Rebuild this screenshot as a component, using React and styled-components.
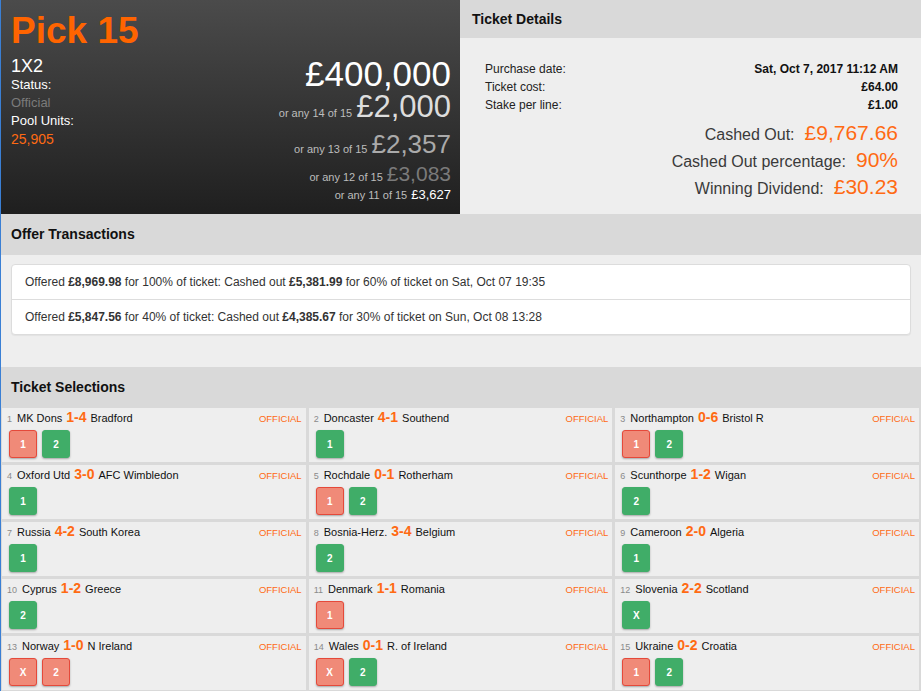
import React from 'react'
import styled, { createGlobalStyle } from 'styled-components'

const GlobalStyle = createGlobalStyle`
  body {
    margin: 0;
    background: #eeeeee;
    font-family: "Liberation Sans", Arial, sans-serif;
    color: #222;
  }
`

const prizes = [
  { label: null, amount: '£400,000', size: 35, color: '#ffffff', mt: 0 },
  { label: 'or any 14 of 15', amount: '£2,000', size: 31, color: '#dddddd', mt: 0 },
  { label: 'or any 13 of 15', amount: '£2,357', size: 26, color: '#aaaaaa', mt: 9 },
  { label: 'or any 12 of 15', amount: '£3,083', size: 21, color: '#7a7a7a', mt: 6 },
  { label: 'or any 11 of 15', amount: '£3,627', size: 13, color: '#ffffff', mt: 4 },
]

const offers = [
  ['£8,969.98', '100%', '£5,381.99', '60%', 'Sat, Oct 07 19:35'],
  ['£5,847.56', '40%', '£4,385.67', '30%', 'Sun, Oct 08 13:28'],
]

// picks: [label, won]
const selections = [
  [1, 'MK Dons', '1-4', 'Bradford', [['1', false], ['2', true]]],
  [2, 'Doncaster', '4-1', 'Southend', [['1', true]]],
  [3, 'Northampton', '0-6', 'Bristol R', [['1', false], ['2', true]]],
  [4, 'Oxford Utd', '3-0', 'AFC Wimbledon', [['1', true]]],
  [5, 'Rochdale', '0-1', 'Rotherham', [['1', false], ['2', true]]],
  [6, 'Scunthorpe', '1-2', 'Wigan', [['2', true]]],
  [7, 'Russia', '4-2', 'South Korea', [['1', true]]],
  [8, 'Bosnia-Herz.', '3-4', 'Belgium', [['2', true]]],
  [9, 'Cameroon', '2-0', 'Algeria', [['1', true]]],
  [10, 'Cyprus', '1-2', 'Greece', [['2', true]]],
  [11, 'Denmark', '1-1', 'Romania', [['1', false]]],
  [12, 'Slovenia', '2-2', 'Scotland', [['X', true]]],
  [13, 'Norway', '1-0', 'N Ireland', [['X', false], ['2', false]]],
  [14, 'Wales', '0-1', 'R. of Ireland', [['X', false], ['2', true]]],
  [15, 'Ukraine', '0-2', 'Croatia', [['1', false], ['2', true]]],
]

function App() {
  return (
    <Page>
      <GlobalStyle />
      <Top>
        <Hero>
          <Title>Pick 15</Title>
          <HeroBody>
            <Info>
              <GameType>1X2</GameType>
              <InfoLine>Status:</InfoLine>
              <InfoLine muted>Official</InfoLine>
              <InfoLine>Pool Units:</InfoLine>
              <Units>25,905</Units>
            </Info>
            <Prizes>
              {prizes.map((p, i) => (
                <PrizeRow key={i} size={p.size} color={p.color} mt={p.mt}>
                  {p.label && <PrizeLabel>{p.label}</PrizeLabel>}
                  <span>{p.amount}</span>
                </PrizeRow>
              ))}
            </Prizes>
          </HeroBody>
        </Hero>

        <Details>
          <SectionHeader pl={12} compact>Ticket Details</SectionHeader>
          <DetailsBody>
            <InfoRow><span>Purchase date:</span><b>Sat, Oct 7, 2017 11:12 AM</b></InfoRow>
            <InfoRow><span>Ticket cost:</span><b>£64.00</b></InfoRow>
            <InfoRow><span>Stake per line:</span><b>£1.00</b></InfoRow>
            <Summary>
              <SummaryRow><span>Cashed Out:</span><Hot>£9,767.66</Hot></SummaryRow>
              <SummaryRow><span>Cashed Out percentage:</span><Hot>90%</Hot></SummaryRow>
              <SummaryRow><span>Winning Dividend:</span><Hot>£30.23</Hot></SummaryRow>
            </Summary>
          </DetailsBody>
        </Details>
      </Top>

      <SectionHeader>Offer Transactions</SectionHeader>
      <OffersBody>
        <OfferCard>
          {offers.map((o, i) => (
            <OfferRow key={i}>
              Offered <b>{o[0]}</b> for {o[1]} of ticket: Cashed out <b>{o[2]}</b> for {o[3]} of ticket on {o[4]}
            </OfferRow>
          ))}
        </OfferCard>
      </OffersBody>

      <SectionHeader>Ticket Selections</SectionHeader>
      <Grid>
        {selections.map(([n, home, score, away, picks]) => (
          <Cell key={n}>
            <CellHead>
              <Num>{n}</Num>
              <Team>{home}</Team>
              <Score>{score}</Score>
              <Team>{away}</Team>
              <Official>OFFICIAL</Official>
            </CellHead>
            <Picks>
              {picks.map(([label, won]) => (
                <Pick key={label} won={won}>{label}</Pick>
              ))}
            </Picks>
          </Cell>
        ))}
      </Grid>
    </Page>
  )
}

export default App

const Page = styled.div`
  border-left: 1px solid #3a7fd4;
  min-height: 100vh;
`

const Top = styled.div`
  display: grid;
  grid-template-columns: 459px 1fr;
`

const Hero = styled.div`
  background: linear-gradient(to bottom, #4b4b4b, #1f1f1f);
  padding: 12px 9px 12px 10px;
  height: 214px;
  box-sizing: border-box;
`

const Title = styled.div`
  color: #ff6400;
  font-size: 37px;
  font-weight: bold;
  line-height: 37px;
`

const HeroBody = styled.div`
  display: flex;
  justify-content: space-between;
  margin-top: 7px;
`

const Info = styled.div`
  color: #fff;
`

const GameType = styled.div`
  font-size: 18px;
  line-height: 20px;
`

const InfoLine = styled.div`
  font-size: 13px;
  line-height: 18px;
  color: ${p => (p.muted ? '#7b7b7b' : '#ffffff')};
`

const Units = styled.div`
  font-size: 14px;
  line-height: 18px;
  color: #ff6a13;
`

const Prizes = styled.div`
  display: flex;
  flex-direction: column;
  align-items: flex-end;
`

const PrizeRow = styled.div`
  display: flex;
  align-items: baseline;
  gap: 4px;
  font-size: ${p => p.size}px;
  line-height: 1;
  color: ${p => p.color};
  margin-top: ${p => p.mt}px;
`

const PrizeLabel = styled.span`
  font-size: 11px;
  line-height: 1;
  color: #bdbdbd;
`

const Details = styled.div`
  background: #eeeeee;
`

const SectionHeader = styled.div`
  background: #d9d9d9;
  font-size: 14px;
  font-weight: bold;
  line-height: 18px;
  color: #111;
  padding: ${p => (p.compact ? '10px' : '11px')} 10px ${p => (p.compact ? '10px' : '12px')} ${p => p.pl || 10}px;
`

const DetailsBody = styled.div`
  padding: 22px 23px 0 25px;
`

const InfoRow = styled.div`
  display: flex;
  justify-content: space-between;
  font-size: 12px;
  line-height: 18px;
  color: #222;

  b {
    color: #111;
  }
`

const Summary = styled.div`
  margin-top: 6px;
`

const SummaryRow = styled.div`
  display: flex;
  justify-content: flex-end;
  align-items: baseline;
  gap: 10px;
  font-size: 16px;
  line-height: 25px;
  color: #3a3a3a;
`

const Hot = styled.span`
  font-size: 21px;
  color: #ff6a13;
`

const OffersBody = styled.div`
  padding: 9px 10px 32px;
  background: #eeeeee;
`

const OfferCard = styled.div`
  background: #fff;
  border: 1px solid #dcdcdc;
  border-radius: 4px;
  box-shadow: 0 1px 1px rgba(0, 0, 0, 0.05);
`

const OfferRow = styled.div`
  padding: 8px 13px;
  font-size: 12px;
  line-height: 18px;
  color: #333;

  & + & {
    border-top: 1px solid #dddddd;
  }
`

const Grid = styled.div`
  display: grid;
  grid-template-columns: repeat(3, 1fr);
  gap: 3px;
  padding: 0 2px 3px 1px;
  background: #d9d9d9;
`

const Cell = styled.div`
  background: #eeeeee;
  height: 54px;
  padding: 1px 4px 0 5px;
  box-sizing: border-box;
`

const CellHead = styled.div`
  display: flex;
  align-items: baseline;
  gap: 4px;
  font-size: 11px;
  line-height: 16px;
`

const Num = styled.span`
  font-size: 9px;
  color: #8a8a8a;
  margin-right: 1px;
`

const Team = styled.span`
  color: #111;
`

const Score = styled.span`
  font-size: 14px;
  font-weight: bold;
  color: #ff6a13;
`

const Official = styled.span`
  margin-left: auto;
  font-size: 9.5px;
  color: #ff6a13;
`

const Picks = styled.div`
  display: flex;
  gap: 5px;
  margin-top: 3px;
  padding-left: 2px;
`

const Pick = styled.div`
  width: 28px;
  height: 28px;
  box-sizing: border-box;
  display: flex;
  align-items: center;
  justify-content: center;
  border-radius: 3px;
  font-size: 10px;
  font-weight: bold;
  color: #fff;
  background: ${p => (p.won ? '#40ad68' : '#f08a78')};
  border: 1px solid ${p => (p.won ? '#40ad68' : '#e5493a')};
  box-shadow: 0 1px 2px rgba(0, 0, 0, 0.3);
`
